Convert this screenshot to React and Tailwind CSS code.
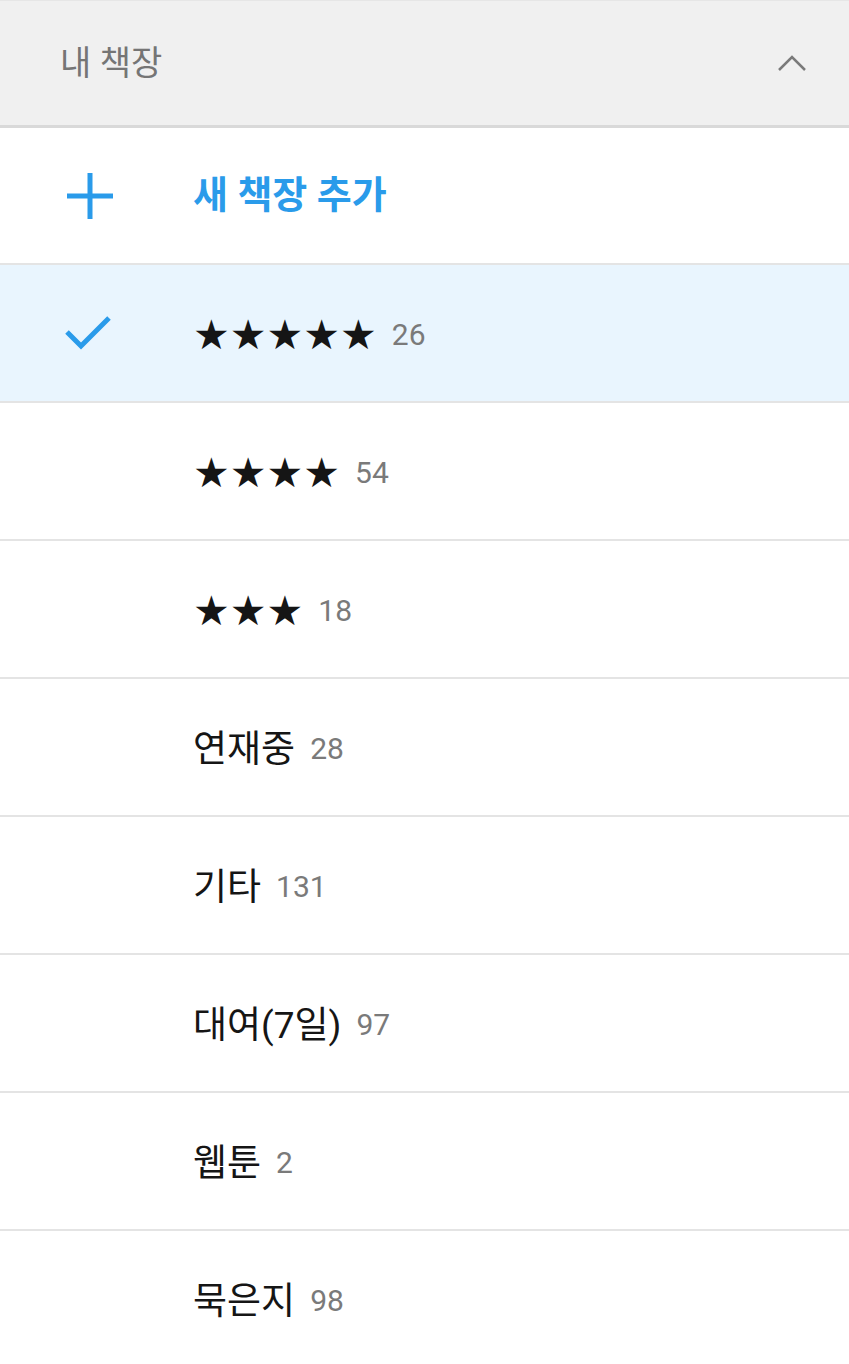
import React from "react";

const font = { fontFamily: 'Roboto, "Noto Sans CJK KR", sans-serif' };

const rows = [
  { label: "★★★★★", count: 26, selected: true, star: true },
  { label: "★★★★", count: 54, star: true },
  { label: "★★★", count: 18, star: true },
  { label: "연재중", count: 28 },
  { label: "기타", count: 131 },
  { label: "대여(7일)", count: 97 },
  { label: "웹툰", count: 2 },
  { label: "묵은지", count: 98 },
];

function Row({ r }) {
  return (
    <div
      className={`flex h-[138px] items-center border-b-2 border-[#e4e4e4] ${
        r.selected ? "bg-[#e9f5fe]" : "bg-white"
      }`}
    >
      <div className="flex w-[193px] justify-center pr-[13px]">
        {r.selected && (
          <svg width="52" height="40" viewBox="0 0 52 40">
            <path d="M3 19 L17 33 L45 5" fill="none" stroke="#2a9bea" strokeWidth="5" />
          </svg>
        )}
      </div>
      <div className="flex items-center pt-[4px]">
        {r.star ? (
          <span className="text-[41px] leading-none text-[#151515]" style={{ fontFamily: '"DejaVu Sans", sans-serif' }}>
            {r.label}
          </span>
        ) : (
          <span className="text-[37px] leading-none text-[#151515]">{r.label}</span>
        )}
        <span className="ml-[15px] text-[30px] leading-none text-[#7a7a7a]">{r.count}</span>
      </div>
    </div>
  );
}

export default function App() {
  return (
    <div className="w-[849px] h-[1364px] overflow-hidden bg-white" style={font}>
      <div className="flex h-[128px] items-center justify-between border-t border-b-[3px] border-t-[#e6e6e6] border-b-[#d9d9d9] bg-[#f0f0f0] pl-[60px] pr-[42px]">
        <span className="text-[34px] text-[#757575]">내 책장</span>
        <svg width="30" height="18" viewBox="0 0 30 18">
          <path d="M2 16 L15 3 L28 16" fill="none" stroke="#7a7a7a" strokeWidth="2.5" />
        </svg>
      </div>
      <div className="flex h-[137px] items-center border-b-2 border-[#e4e4e4]">
        <div className="flex w-[193px] justify-center pr-[13px]">
          <svg width="48" height="48" viewBox="0 0 48 48">
            <path d="M24 1 V47 M1 24 H47" fill="none" stroke="#2a9bea" strokeWidth="5" />
          </svg>
        </div>
        <span className="text-[38px] font-bold text-[#2a9bea]">새 책장 추가</span>
      </div>
      {rows.map((r, i) => (
        <Row key={i} r={r} />
      ))}
    </div>
  );
}
